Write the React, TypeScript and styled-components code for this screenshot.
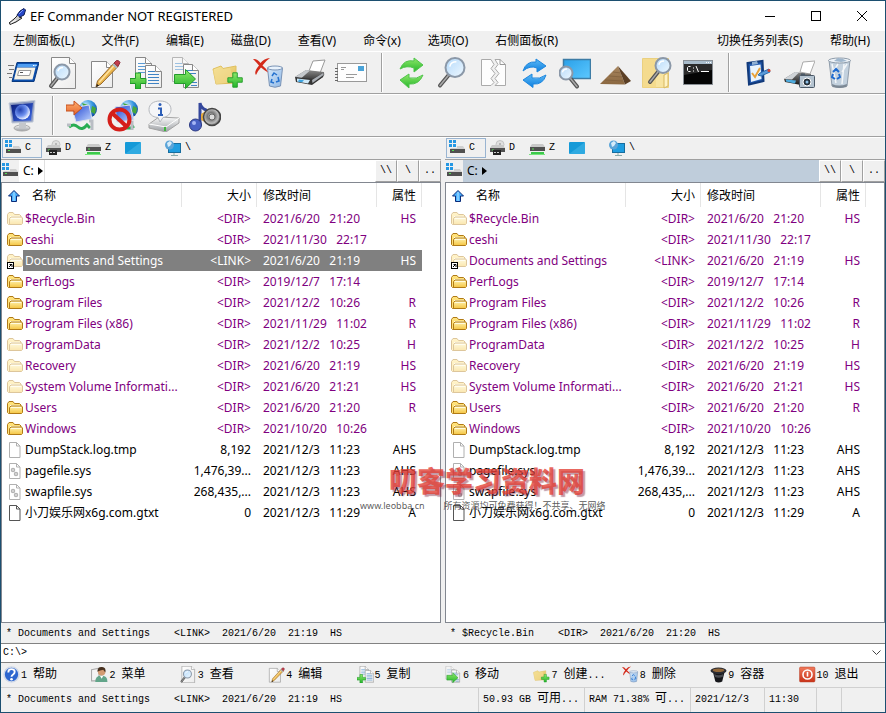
import React from 'react';
import styled, { createGlobalStyle, css } from 'styled-components';

const sans = '"Noto Sans", "Noto Sans CJK SC", sans-serif';
const mono = '"Liberation Mono", "Noto Sans CJK SC", monospace';

const GlobalStyle = createGlobalStyle`
  *, *::before, *::after { box-sizing: border-box; }
  html, body { margin: 0; padding: 0; }
  body { background: #f0f0f0; color: #000; font: 12px/16px ${sans}; overflow: hidden; }
  button, input { font: inherit; color: inherit; }
  button { margin: 0; padding: 0; border: 0; background: transparent; }
`;

/* ---------- layout ---------- */

const Window = styled.div`
  display: flex;
  flex-direction: column;
  min-height: 100vh;
  border: 1px solid #1c4f70;
  background: #f0f0f0;
`;

const TitleBar = styled.header`
  display: flex;
  align-items: center;
  height: 30px;
  padding-left: 8px;
  background: #fff;
`;

const Title = styled.h1`
  flex: 1;
  margin: 0 0 0 4px;
  font-size: 13px;
  font-weight: 400;
`;

const CaptionButton = styled.button`
  width: 46px;
  height: 30px;
  display: grid;
  place-items: center;
`;

const MenuBar = styled.nav`
  display: flex;
  height: 21px;
  border-bottom: 1px solid #fff;
`;

const MenuItem = styled.button<{ $push?: boolean }>`
  padding: 0 15px 0 12px;
  white-space: nowrap;
  margin-left: ${(p) => (p.$push ? 'auto' : 0)};
`;

const Toolbar = styled.div<{ $inset?: boolean }>`
  display: flex;
  height: 43px;
  padding-left: ${(p) => (p.$inset ? 1 : 0)}px;
  border-bottom: 1px solid #fff;
  box-shadow: inset 0 -1px #a0a0a0;
`;

const ToolButton = styled.button`
  width: 41px;
  height: 41px;
  display: grid;
  place-items: center;
`;

const Separator = styled.div`
  width: 2px;
  height: 39px;
  margin: 1px 7px 0 10px;
  border-left: 1px solid #a0a0a0;
  border-right: 1px solid #fff;
`;

const Panels = styled.main`
  position: relative;
  flex: 1;
  display: grid;
  grid-template-columns: 1fr 1fr;
  column-gap: 4px;
`;

const Panel = styled.section`
  display: flex;
  flex-direction: column;
  min-width: 0;
`;

const DriveBar = styled.div`
  display: flex;
  height: 22px;
  padding-left: 1px;
  border-bottom: 1px solid #a0a0a0;
`;

const DriveButton = styled.button<{ $active?: boolean }>`
  display: flex;
  align-items: center;
  gap: 4px;
  width: 40px;
  height: 20px;
  padding-left: 2px;
  font: 10px/16px ${mono};
  border: 1px solid ${(p) => (p.$active ? '#99b4d1' : 'transparent')};
`;

const PathBar = styled.div`
  display: flex;
  align-items: stretch;
  height: 22px;
`;

const PathIcon = styled.div`
  width: 18px;
  padding-left: 1px;
  display: flex;
  align-items: center;
`;

const Crumbs = styled.div<{ $focused?: boolean }>`
  flex: 1;
  display: flex;
  align-items: stretch;
  background: ${(p) => (p.$focused ? '#bfcddb' : '#fff')};
`;

const Crumb = styled.button<{ $focused?: boolean }>`
  display: flex;
  align-items: center;
  gap: 4px;
  width: 26px;
  padding-left: 4px;
  border-right: 1px solid ${(p) => (p.$focused ? '#bfcddb' : '#e0e0e0')};
`;

const PathButton = styled.button`
  width: 22px;
  font: 10px/16px ${mono};
  border: 1px solid #a0a0a0;
  border-top: 1px solid #fff;
  border-left: 1px solid #fff;
`;

const ListBox = styled.div`
  flex: 1;
  background: #fff;
  border: 1px solid #828790;
`;

const FileTable = styled.table`
  width: calc(100% - 18px);
  table-layout: fixed;
  border-collapse: collapse;
  white-space: pre;
`;

const Col = styled.col<{ $w?: number }>`
  width: ${(p) => (p.$w ? `${p.$w}px` : 'auto')};
`;

const HeadCell = styled.th<{ $right?: boolean }>`
  height: 25px;
  padding: 0 6px;
  font-weight: 400;
  line-height: 24px;
  text-align: ${(p) => (p.$right ? 'right' : 'left')};
  background: linear-gradient(#e5e5e5, #e5e5e5) right top / 1px 24px no-repeat;
`;

const HeadName = styled.span`
  display: flex;
  align-items: center;
  gap: 12px;
`;

const Cell = styled.td<{ $right?: boolean }>`
  height: 21px;
  padding: 0 6px;
  overflow: hidden;
  line-height: 21px;
  text-align: ${(p) => (p.$right ? 'right' : 'left')};
`;

const IconCell = styled(Cell)`
  padding: 0 0 0 5px;
  && { background: #fff; }
  svg { display: block; }
`;

const NameCell = styled(Cell)`
  padding: 0 0 0 2px;
`;

const Row = styled.tr<{ $dir?: boolean; $selected?: boolean }>`
  color: ${(p) => (p.$dir ? '#800080' : '#000')};
  ${(p) =>
    p.$selected &&
    css`
      color: #fff;
      td { background: #808080; }
    `}
`;

const MonoLine = styled.div`
  height: 20px;
  padding: 1px 0 0 5px;
  font: 10px/19px ${mono};
  white-space: pre;
`;

const CommandBar = styled.div`
  display: flex;
  height: 20px;
  background: #fff;
  border: solid #828282;
  border-width: 1px 0;
`;

const CommandInput = styled.input`
  flex: 1;
  padding: 0 2px 1px;
  border: 0;
  outline: 0;
  background: transparent;
  font: 10px/16px ${mono};
`;

const CommandDrop = styled.button`
  width: 18px;
  display: grid;
  place-items: center;
`;

const FunctionBar = styled.div`
  display: grid;
  grid-template-columns: repeat(10, 1fr);
  height: 25px;
  border-bottom: 1px solid #d0d0d0;
`;

const FunctionButton = styled.button`
  display: flex;
  align-items: center;
  gap: 1px;
  padding-left: 2px;
  padding-bottom: 1px;
  font: 10px/16px ${mono};
  white-space: pre;
`;

const Han = styled.span`
  font: 12px/16px ${sans};
`;

const StatusBar = styled.footer`
  display: flex;
  height: 24px;
  font: 10px/24px ${mono};
  white-space: pre;
`;

const StatusCell = styled.div<{ $w?: number }>`
  ${(p) => (p.$w ? `width: ${p.$w}px;` : 'flex: 1;')}
  padding-left: ${(p) => (p.$w ? 4 : 5)}px;
  overflow: hidden;
  & + & { border-left: 1px solid #d0d0d0; }
`;

const Watermark = styled.div`
  position: absolute;
  left: 359px;
  top: 323px;
  width: 260px;
  pointer-events: none;
  white-space: nowrap;
`;

const WatermarkTitle = styled.div`
  padding-left: 29px;
  font: 900 28px/38px "Noto Sans CJK SC", sans-serif;
  color: rgba(226, 62, 52, 0.78);
  text-shadow: 2px 2px 1px rgba(120, 30, 60, 0.45);
`;

const WatermarkNote = styled.div`
  display: flex;
  gap: 19px;
  padding-top: 1px;
  font: 9px/12px ${sans};
  color: rgba(60, 60, 60, 0.85);
`;

/* ---------- icons ---------- */

const Svg = ({ s = 32, children }: { s?: number; children: React.ReactNode }) => (
  <svg width={s} height={s} viewBox="0 0 32 32" fill="none" aria-hidden="true">
    {children}
  </svg>
);

const HiddenSvg = styled.svg`
  position: absolute;
  width: 0;
  height: 0;
`;

const Grad = ({ id, a, b, d }: { id: string; a: string; b: string; d?: boolean }) => (
  <linearGradient id={id} x1="0" y1="0" x2={d ? 1 : 0} y2="1">
    <stop stopColor={a} />
    <stop offset="1" stopColor={b} />
  </linearGradient>
);

const Defs = () => (
  <HiddenSvg aria-hidden="true">
    <defs>
      <Grad id="paper" a="#fff" b="#ececec" d />
      <Grad id="green" a="#8fe86a" b="#23b52b" />
      <Grad id="blue" a="#5cb9f5" b="#0d7fe0" />
      <Grad id="sky" a="#2aa0e8" b="#5cc8ff" d />
      <Grad id="lens" a="#b4d9fa" b="#eef8ff" d />
      <Grad id="folder" a="#f8e8a0" b="#dfb84e" d />
      <Grad id="bin" a="#d5e8fa" b="#8db7e6" d />
      <Grad id="dark" a="#8a8a8a" b="#161616" />
      <Grad id="metal" a="#fafafa" b="#9a9ea3" />
      <Grad id="night" a="#0a1b78" b="#3d6be8" d />
      <Grad id="screen" a="#1a3fd0" b="#c3d8ff" d />
      <Grad id="orange" a="#ffb070" b="#e5642c" />
      <Grad id="red" a="#f07a5c" b="#c93218" />
      <Grad id="sand" a="#a98760" b="#8a6740" />
      <Grad id="fold16" a="#fff3b0" b="#f5c542" />
      <radialGradient id="globe" cx=".35" cy=".3" r=".8">
        <stop stopColor="#cdeeff" />
        <stop offset=".5" stopColor="#3796e0" />
        <stop offset="1" stopColor="#0b3f94" />
      </radialGradient>
      <radialGradient id="moon" cx=".35" cy=".35" r=".7">
        <stop stopColor="#2040b0" />
        <stop offset=".6" stopColor="#6f92f0" />
        <stop offset="1" stopColor="#fff" />
      </radialGradient>
      <radialGradient id="cone" cx=".45" cy=".45" r=".6">
        <stop stopColor="#f4f4f4" />
        <stop offset=".35" stopColor="#777" />
        <stop offset=".7" stopColor="#bbb" />
        <stop offset="1" stopColor="#444" />
      </radialGradient>
    </defs>
  </HiddenSvg>
);

const Plus = ({ x, y, k = 1 }: { x: number; y: number; k?: number }) => (
  <path
    transform={`translate(${x} ${y}) scale(${k})`}
    d="M-3-8h5v5.500h5.500v5h-5.500v5.500h-5v-5.500h-5.500v-5h5.500z"
    fill="url(#green)"
    stroke="#1f9a28"
  />
);

const Glass = ({ x, y, r, hx, hy }: { x: number; y: number; r: number; hx: number; hy: number }) => {
  const len = Math.hypot(hx - x, hy - y);
  const sx = x + ((hx - x) * r) / len;
  const sy = y + ((hy - y) * r) / len;
  return (
    <g>
      <path d={`M${sx} ${sy}L${hx} ${hy}`} stroke="#555" strokeWidth="4" strokeLinecap="round" />
      <path d={`M${sx} ${sy}L${hx} ${hy}`} stroke="#aaa" strokeWidth="1.500" strokeLinecap="round" />
      <circle cx={x} cy={y} r={r} fill="url(#lens)" stroke="#8b98a8" strokeWidth="2" />
      <path d={`M${x - r * 0.55} ${y - r * 0.1}q${r * 0.1}-${r * 0.5} ${r * 0.7}-${r * 0.5}`} stroke="#fff" strokeWidth="1.500" />
    </g>
  );
};

const Page = ({ x, y, w, h }: { x: number; y: number; w: number; h: number }) => (
  <g stroke="#888">
    <path d={`M${x} ${y}h${w - 6}l6 6v${h - 6}h${-w}z`} fill="url(#paper)" />
    <path d={`M${x + w - 6} ${y}v6h6`} fill="#fff" />
  </g>
);

const icons = {
  speed: (s?: number) => (
    <Svg s={s}>
      <path d="M1 8.500h6M2 12.500h5M0 16.500h5M2 20.500h3" stroke="#777" />
      <path d="M10 5.500h22l-5 19H5z" fill="#0b4fae" stroke="#0a3a80" />
      <path d="M11 7h19l-1 3H10z" fill="#4f9df0" />
      <path d="M10 10.500h18.500l-3 12H7z" fill="#f6f2e6" />
      <path d="M12 13.500h12l-1.500 5h-12z" fill="#fff" stroke="#999" />
      <path d="M13 15.500h3" stroke="#555" />
      <path d="M26 8.500h1.500M28.500 8.500h1" stroke="#fff" />
    </Svg>
  ),
  view: (s?: number) => (
    <Svg s={s}>
      <Page x={3.5} y={0.5} w={24} h={31} />
      <Glass x={14} y={15} r={7.5} hx={3} hy={29} />
    </Svg>
  ),
  edit: (s?: number) => (
    <Svg s={s}>
      <Page x={2.5} y={4.5} w={21} h={26} />
      <path d="M25 6l4 3.500L12 27l-5 3 1.500-6z" fill="#e9b54c" stroke="#96662a" />
      <path d="M26 7.500L10 25.500" stroke="#ffe2a0" strokeWidth="1.500" />
      <path d="M25 6l2.500-2.500q2.500-.5 3.500 2L29 9.500z" fill="#c33d4c" stroke="#8c2f3c" />
      <path d="M24 7l4 4" stroke="#a7b6c2" strokeWidth="2" />
      <path d="M7 30l1-3 2 1.500z" fill="#222" />
    </Svg>
  ),
  copy: (s?: number) => (
    <Svg s={s}>
      <Page x={5.5} y={0.5} w={16} h={24} />
      <path d="M8 6.500h7M8 9.500h9M8 12.500h9M8 15.500h9" stroke="#5b9bd5" />
      <Page x={15.500} y={8.500} w={16} h={22} />
      <path d="M18 14.500h7M18 17.500h11M18 20.500h11M18 23.500h11M18 26.500h11" stroke="#3f83c4" />
      <Plus x={8.500} y={24} />
    </Svg>
  ),
  move: (s?: number) => (
    <Svg s={s}>
      <g opacity=".55">
        <Page x={1.5} y={0.5} w={16} h={24} />
        <path d="M4 6.500h7M4 9.500h9M4 12.500h9" stroke="#5b9bd5" />
      </g>
      <Page x={12.5} y={7.500} w={15} h={23} />
      <path d="M15 13.500h7M15 16.500h10M20 25.500h6M20 28.500h6" stroke="#3f83c4" />
      <path d="M3.500 17.500h11v-5l10 9.500-10 9.500v-5h-11z" fill="url(#green)" stroke="#239b2b" />
    </Svg>
  ),
  newFolder: (s?: number) => (
    <Svg s={s}>
      <path d="M1 12l8-3 2 2.500 13-2.500v17L4 27z" fill="url(#folder)" stroke="#e0c060" />
      <path d="M1 13.500L18 11l4 14-18 2z" fill="#f2dc92" opacity=".7" />
      <Plus x={23.500} y={23} k={0.9} />
    </Svg>
  ),
  remove: (s?: number) => (
    <Svg s={s}>
      <path d="M14.500 11h15l-2 18q-5.500 2.500-11 0z" fill="url(#bin)" stroke="#7a93b5" />
      <ellipse cx="22" cy="11" rx="7.500" ry="2" fill="#e8f2fc" stroke="#7a93b5" />
      <path d="M19 19l2-3 3 2M25 20l1 4-3 1M21 26l-3-1 1-3" stroke="#2472cf" strokeWidth="1.500" />
      <path d="M0 2Q4 1.500 7.500 6 11 1.500 17 1q-4.500 3-7.500 7.500Q14 12 15 15.500q-3.500-2-7-5Q4.500 14 3 18q-2.500-3 3-9.500Q3 5 0 2z" fill="#d42a1a" />
    </Svg>
  ),
  print: (s?: number) => (
    <Svg s={s}>
      <path d="M15 14l4-10 12-1-5 13z" fill="#fff" stroke="#999" />
      <path d="M1 20l11-7 18 2q1 3-1 5L18 27z" fill="url(#dark)" />
      <path d="M1 20l11-7 4 .5-9 8z" fill="#c4c8cc" />
      <path d="M1 20l18 2 10-6v4l-11 8-16-3z" fill="#353535" />
      <path d="M3 21.500l13 1.500-2 3.500-11-2z" fill="#cfe9f8" />
      <path d="M5 22.500l5 .8-2 2-4-.6z" fill="#3aa2df" />
      <path d="M18 23l11-7 .5 2-11 8z" fill="#a8adb3" />
    </Svg>
  ),
  mail: (s?: number) => (
    <Svg s={s}>
      <rect x="2.500" y="6.500" width="29" height="18" fill="#fdfdfd" stroke="#999" />
      <rect x="23" y="9" width="6" height="5" fill="#4aa3d8" />
      <path d="M6 10.500h5M6 12.500h3M11 17.500h11M11 20.500h8" stroke="#999" />
      <path d="M0 11.500h3M0 14.500h3M0 17.500h3M0 20.500h3M0 23.500h3" stroke="#666" />
    </Svg>
  ),
  refresh: (s?: number) => (
    <Svg s={s}>
      <path d="M5 12Q9 2 19 4V1l9 7-9 7v-4Q12 8 5 12z" fill="url(#green)" stroke="#4fc44a" />
      <path d="M28 18Q24 28 14 27v4l-9-8 9-6v4q8 1.500 14-3z" fill="url(#green)" stroke="#4fc44a" />
    </Svg>
  ),
  search: (s?: number) => (
    <Svg s={s}>
      <Glass x={19} y={10.5} r={9.5} hx={4} hy={28.500} />
    </Svg>
  ),
  split: (s?: number) => (
    <Svg s={s}>
      <path d="M4.500 2.500H14l3 5-3 4 4 5-4 5 3 4-3 3H4.500z" fill="#fdfdfd" stroke="#aaa" />
      <path d="M18 2.500h5l5.500 5v21H18l3-3-3-4 4-5-4-5 3-4z" fill="#fdfdfd" stroke="#aaa" />
      <path d="M23 2.500v5h5.500" stroke="#999" />
    </Svg>
  ),
  sync: (s?: number) => (
    <Svg s={s}>
      <path d="M5 14Q8 4 18 5V2l10 7-9 6v-4Q12 8 5 14z" fill="url(#blue)" stroke="#1d86de" />
      <path d="M28 18Q25 28 15 27v3.500L5 23l9-6v4q8 1.500 14-3z" fill="url(#blue)" stroke="#1d86de" />
    </Svg>
  ),
  screenSearch: (s?: number) => (
    <Svg s={s}>
      <rect x="4.500" y="2.500" width="27" height="19" fill="url(#sky)" stroke="#3d7ca5" strokeWidth="1.500" />
      <Glass x={7} y={16} r={6.500} hx={18} hy={29.500} />
    </Svg>
  ),
  pyramid: (s?: number) => (
    <Svg s={s}>
      <path d="M18 9L0 27l25 .5z" fill="url(#sand)" />
      <path d="M18 9l13 15-6 3.500z" fill="#5b3f25" />
      <path d="M13 15l8 1M9 19l13 1M5 23l18 1" stroke="#7a5a38" opacity=".6" />
    </Svg>
  ),
  folderSearch: (s?: number) => (
    <Svg s={s}>
      <path d="M1.500 1.500h26v29h-26z" fill="#f8e4a0" stroke="#ead080" />
      <path d="M2 2h13v29H2z" fill="#f1d582" opacity=".6" />
      <path d="M23 18l4-2v13l-4 2z" fill="#fff3c4" stroke="#d8b860" />
      <Glass x={22} y={8.500} r={7.500} hx={9} hy={25} />
    </Svg>
  ),
  console: (s?: number) => (
    <Svg s={s}>
      <rect x="1.500" y="3.500" width="29" height="24" fill="#050505" stroke="#8a9096" />
      <path d="M2 4h28v3H2z" fill="#a9bccb" />
      <path d="M2 7h28v6L2 18z" fill="#2b2b2b" />
      <path d="M24 5.500h1M26 5.500h1M28 5.500h1" stroke="#fff" />
      <path d="M8.500 9.500h-2l-1 1v3l1 1h2M11.500 10.500v1M11.500 13.500v1M14 9l2.500 6M19 14.500h8" stroke="#fff" />
    </Svg>
  ),
  checklist: (s?: number) => (
    <Svg s={s}>
      <path d="M5.500 6l15-2 1 20L7 27.500z" fill="#2058ad" stroke="#123a7a" strokeWidth="2" />
      <path d="M8 9l10.500-1.500 1 14.500L9 25z" fill="#e9f3fd" />
      <path d="M10 5l5-1 1 3-6 1z" fill="#8fb0d4" />
      <path d="M10 16l3 4 5-9" stroke="#e9a23a" strokeWidth="2" />
      <path d="M16 18l2-2 9-4 1 3-9 4z" fill="#5b9ad8" stroke="#2b6cb0" />
      <circle cx="27" cy="13.500" r="1.500" fill="#d8442c" />
    </Svg>
  ),
  printCamera: (s?: number) => (
    <Svg s={s}>
      <path d="M17 15l3-10 12-1-5 13z" fill="#fff" stroke="#aaa" />
      <path d="M1 22l11-7 16 2v8l-10 3-16-3z" fill="url(#dark)" />
      <path d="M1 22l11-7 4 .5-7 7z" fill="#cfd3d7" />
      <path d="M3 22.500l10 1-1 3-9-2z" fill="#4eacdf" />
      <rect x="16.500" y="18.500" width="15" height="12" rx="1" fill="#b4c3d0" stroke="#4a5866" />
      <circle cx="24" cy="25" r="4" fill="#26323c" stroke="#fff" />
      <circle cx="24" cy="25" r="1.500" fill="#8ec0e8" />
      <path d="M18 17.500h4" stroke="#4a5866" strokeWidth="2" />
    </Svg>
  ),
  recycle: (s?: number) => (
    <Svg s={s}>
      <path d="M5 3h21l-3 26q-7 3-15 0z" fill="#c3d1de" stroke="#8f9caa" />
      <path d="M8 27q7 3 15 0l-.5 3q-7 2-14 0z" fill="#7c8894" />
      <ellipse cx="15.500" cy="3.500" rx="11" ry="2.500" fill="#eef3f8" stroke="#8f9caa" />
      <path d="M8 7l4 19M14 7l-5 8M20 7l-2 20M23 7l-5 8" stroke="#fff" strokeWidth="1.500" opacity=".8" />
      <path d="M10 4l4-3 5 1 4 2-6 1z" fill="#9fb6cc" />
      <path d="M9 15l3-3 3 3M15 17l1 3-3 2M11 22l-3-2 1-3" stroke="#1e6bd0" strokeWidth="2" />
    </Svg>
  ),
  nightScreen: (s?: number) => (
    <Svg s={s}>
      <ellipse cx="16" cy="28" rx="8" ry="3" fill="url(#metal)" stroke="#aaa" />
      <path d="M13 22h7v6h-7z" fill="#c4c7cb" />
      <path d="M3 3l26-2.500-2 21.500L6 23z" fill="#8c9ac0" stroke="#c4ccd8" />
      <path d="M5 5l22-2-2 17.500L7.500 21z" fill="url(#night)" />
      <circle cx="16.500" cy="12" r="7.500" fill="url(#moon)" />
    </Svg>
  ),
  netConnect: (s?: number) => (
    <Svg s={s}>
      <circle cx="22" cy="9" r="9" fill="url(#globe)" />
      <path d="M16 3l6 2-3 5zM26 6l4 2-1 6-4-2z" fill="#47a83a" />
      <path d="M6 8l17-3 3 14-16 3z" fill="url(#screen)" stroke="#dbe0ea" />
      <path d="M0 5h8V1l8 7-8 7v-4H0z" fill="url(#orange)" stroke="#c5501e" />
      <path d="M3 27q5-4 9 0t9-2l3 3" stroke="#28ad52" strokeWidth="3" />
      <path d="M23 21h3v9M1 25h4" stroke="#b9bdc4" strokeWidth="3" />
    </Svg>
  ),
  netDisconnect: (s?: number) => (
    <Svg s={s}>
      <circle cx="22" cy="9" r="9" fill="url(#globe)" />
      <path d="M16 3l6 2-3 5zM26 6l4 2-1 6-4-2z" fill="#47a83a" />
      <path d="M8 7l15-2 4 15-17 2z" fill="url(#screen)" stroke="#dbe0ea" />
      <path d="M16 28h8l3-2" stroke="#28ad52" strokeWidth="3" />
      <path d="M25 21v9" stroke="#b9bdc4" strokeWidth="3" />
      <circle cx="12.500" cy="19.500" r="10" stroke="#d51f1a" strokeWidth="4" />
      <path d="M5 13l14 13" stroke="#d51f1a" strokeWidth="4" />
    </Svg>
  ),
  driveInfo: (s?: number) => (
    <Svg s={s}>
      <path d="M1 24l10-7 20 1v5l-13 9-17-4z" fill="url(#metal)" stroke="#a2a2a2" />
      <path d="M1 24l17 3 13-9" stroke="#fff" />
      <path d="M17 27v4" stroke="#3db83d" strokeWidth="2" />
      <path d="M12 1c7 0 11 3.500 11 8.500 0 4.500-4 7.500-8 8l-3 4.500-2-4.500C4 17 1 14 1 9.500 1 4.500 5 1 12 1z" fill="#f5f6f8" stroke="#b5b8bd" />
      <circle cx="12" cy="4.500" r="1.500" fill="#2e5fb8" />
      <path d="M10 8.500h3v6.500M10 15h5" stroke="#2e5fb8" strokeWidth="2" />
    </Svg>
  ),
  audio: (s?: number) => (
    <Svg s={s}>
      <path d="M11 26V3q1 5 6 7 3 3 0 7" stroke="#34479c" strokeWidth="3" />
      <circle cx="6.500" cy="25" r="6" fill="#4961c4" stroke="#2a3880" />
      <circle cx="5" cy="23" r="2" fill="#a7b6f5" />
      <path d="M12 14l8-5v15l-8-4z" fill="#e4a83e" />
      <circle cx="23" cy="17" r="8.500" fill="url(#cone)" stroke="#444" strokeWidth="1.500" />
      <circle cx="23" cy="17" r="3" fill="#ddd" stroke="#666" />
    </Svg>
  ),
  help: (s?: number) => (
    <Svg s={s}>
      <circle cx="16" cy="16" r="14" fill="#2d66cf" stroke="#cfd8e8" strokeWidth="3" />
      <path d="M10 12q0-6 6-6t6 5q0 3-3 5t-3 4" stroke="#fff" strokeWidth="3.500" />
      <circle cx="16" cy="25" r="2.500" fill="#fff" />
    </Svg>
  ),
  person: (s?: number) => (
    <Svg s={s}>
      <path d="M1 7l14-3v24H1z" fill="#f3f3f3" stroke="#aaa" strokeWidth="2" />
      <path d="M8 30q0-11 11-12 12 0 12 12z" fill="#62a58a" />
      <circle cx="20" cy="11" r="7" fill="#d39b72" />
      <path d="M12 11q0-10 9-9 8 1 6 10l-4-5q-6 1-11 4z" fill="#47311f" />
      <path d="M17 19l3 5 3-5z" fill="#fff" />
    </Svg>
  ),
  hat: (s?: number) => (
    <Svg s={s}>
      <path d="M5 9l5 20q6 4 13 0l5-20z" fill="#15161a" />
      <ellipse cx="16" cy="9" rx="15" ry="6" fill="#2a2c33" />
      <ellipse cx="16" cy="8" rx="11" ry="3.500" fill="#93683a" />
      <path d="M8 15q8 5 17 0l-1 5q-8 4-15 0z" fill="#4a4c52" />
    </Svg>
  ),
  power: (s?: number) => (
    <Svg s={s}>
      <rect x="1" y="2" width="29" height="28" rx="2" fill="url(#red)" stroke="#b9442c" />
      <circle cx="16" cy="16" r="8.500" stroke="#fff" strokeWidth="3" />
      <path d="M16 11v9" stroke="#fff" strokeWidth="3" />
    </Svg>
  ),
};

const WinMark = () => <path d="M0 0h3v3H0zM4 0h3v3H4zM0 4h3v3H0zM4 4h3v3H4z" fill="#2497e3" />;

const Small = ({ children }: { children: React.ReactNode }) => (
  <svg width="16" height="16" viewBox="0 0 16 16" fill="none" aria-hidden="true">
    {children}
  </svg>
);

const DriveShape = ({ y }: { y: number }) => (
  <g>
    <path d={`M3 ${y}h11l2 3H1z`} fill="#c9c9c9" />
    <path d={`M1 ${y + 3}h15v4H1z`} fill="#505050" />
    <path d={`M3 ${y + 5}h2`} stroke="#54dd54" />
  </g>
);

const SystemDrive = () => (
  <Small>
    <path d="M8 6h6l2 3H1l1-1h6z" fill="#d0d0d0" />
    <path d="M1 9h15v4H1z" fill="#505050" />
    <path d="M3 10.500h2" stroke="#54dd54" />
    <WinMark />
  </Small>
);
const OpticalDrive = () => (
  <Small>
    <circle cx="11" cy="4.500" r="4" fill="#e0e0e0" stroke="#c4c4c4" />
    <circle cx="11" cy="4" r="1" fill="#aaa" />
    <DriveShape y={5} />
    <path d="M4 10h8v5H4z" fill="#222" />
    <path d="M5 12.500h6" stroke="#ccc" strokeDasharray="2 1" />
  </Small>
);
const NetDrive = () => (
  <Small>
    <DriveShape y={4} />
    <path d="M2 12h13v2H2z" fill="#3cc94b" />
    <path d="M0 14h16v1H0z" fill="#75e37d" />
  </Small>
);
const Desktop = () => (
  <Small>
    <rect x="0" y="2" width="16" height="12" rx="1" fill="#159ad8" />
    <path d="M0 14L16 2v11l-1 1z" fill="#49b9ea" opacity=".5" />
  </Small>
);
const Network = () => (
  <Small>
    <rect x="3.500" y="3.500" width="12" height="9" fill="#1f9de0" stroke="#176d9e" />
    <path d="M9 13v2M6 15.500h7" stroke="#8aa" />
    <circle cx="4.500" cy="5" r="4.500" fill="#5ba4d8" />
    <path d="M2 3l3-2 2 2-2 3-2 1z" fill="#d6ecfa" />
  </Small>
);

type Kind = 'dir' | 'dim' | 'link' | 'blank' | 'sys' | 'doc';

const FileIcon = ({ kind }: { kind: Kind }) => {
  if (kind === 'dir' || kind === 'dim' || kind === 'link') {
    return (
      <Small>
        <g opacity={kind === 'dir' ? 1 : 0.42}>
          <path d="M.500 12.500v-9l1.500-2h4l1.500 2h5l1.500 1.500v7.500l-1 1H1.500z" fill="#ffe27a" stroke="#b07a16" />
          <path d="M3 5.500h10" stroke="#fffbe0" />
          <path d="M2.500 13.500V7.500L4 6h10.500l1 1v5.500l-1 1z" fill="url(#fold16)" stroke="#b07a16" />
          <path d="M4 7.500h10" stroke="#fffbe0" />
        </g>
        {kind === 'link' && (
          <g>
            <rect x=".500" y="9.500" width="6" height="6" fill="#fff" stroke="#000" />
            <path d="M2 14l3-3M2.500 11.500H5V14" stroke="#000" />
          </g>
        )}
      </Small>
    );
  }
  const line = kind === 'doc' ? '#555' : '#b0b0b0';
  return (
    <Small>
      <path d="M2.500.500h7l3.500 3.500v11.500H2.500z" fill="#fff" stroke={line} />
      <path d="M9.500.500v3.500H13" stroke={line} />
      {kind === 'sys' && (
        <g stroke="#b4b4b4" strokeWidth="1.500">
          <circle cx="6" cy="7" r="1.500" />
          <circle cx="9" cy="11" r="1.500" />
        </g>
      )}
    </Small>
  );
};

const AppIcon = () => (
  <svg width="17" height="17" viewBox="0 0 17 17" fill="none" aria-hidden="true">
    <path d="M8 7l3-4 4-2.500 1.500 1.500-1.500 5-6 3z" fill="#2748c8" stroke="#0b1a50" />
    <path d="M10 6l4-4" stroke="#7d9bff" />
    <path d="M8.500 7.500L5 11l-5 4 1 1.500 6-2.500 6-4-3-1" fill="#ccc" stroke="#222" />
    <path d="M2 15l5-3" stroke="#fff" />
  </svg>
);

const UpArrow = () => (
  <svg width="12" height="12" viewBox="0 0 12 12" fill="none" aria-hidden="true">
    <path d="M6 .500l5.500 5.500h-3v5.500h-5V6h-3z" fill="#4ab2ff" stroke="#0a2a78" />
    <path d="M6 2v9" stroke="#b7e4ff" />
  </svg>
);

/* ---------- data ---------- */

type Entry = [name: string, size: string, date: string, time: string, attr: string, kind: Kind];

const entries: Entry[] = [
  ['$Recycle.Bin', '<DIR>', '2021/6/20', '21:20', 'HS', 'dim'],
  ['ceshi', '<DIR>', '2021/11/30', '22:17', '', 'dir'],
  ['Documents and Settings', '<LINK>', '2021/6/20', '21:19', 'HS', 'link'],
  ['PerfLogs', '<DIR>', '2019/12/7', '17:14', '', 'dir'],
  ['Program Files', '<DIR>', '2021/12/2', '10:26', 'R', 'dir'],
  ['Program Files (x86)', '<DIR>', '2021/11/29', '11:02', 'R', 'dir'],
  ['ProgramData', '<DIR>', '2021/12/2', '10:25', 'H', 'dim'],
  ['Recovery', '<DIR>', '2021/6/20', '21:19', 'HS', 'dim'],
  ['System Volume Informati...', '<DIR>', '2021/6/20', '21:21', 'HS', 'dim'],
  ['Users', '<DIR>', '2021/6/20', '21:20', 'R', 'dir'],
  ['Windows', '<DIR>', '2021/10/20', '10:26', '', 'dir'],
  ['DumpStack.log.tmp', '8,192', '2021/12/3', '11:23', 'AHS', 'blank'],
  ['pagefile.sys', '1,476,39...', '2021/12/3', '11:23', 'AHS', 'sys'],
  ['swapfile.sys', '268,435,...', '2021/12/3', '11:23', 'AHS', 'sys'],
  ['小刀娱乐网x6g.com.gtxt', '0', '2021/12/3', '11:29', 'A', 'doc'],
];

type IconName = keyof typeof icons;

const toolGroups: [IconName, string][][] = [
  [
    ['speed', '快速启动'],
    ['view', '查看'],
    ['edit', '编辑'],
    ['copy', '复制'],
    ['move', '移动'],
    ['newFolder', '创建目录'],
    ['remove', '删除'],
    ['print', '打印'],
    ['mail', '邮件'],
  ],
  [
    ['refresh', '刷新'],
    ['search', '搜索'],
    ['split', '分割'],
    ['sync', '同步'],
    ['screenSearch', '查找窗口'],
    ['pyramid', '打包'],
    ['folderSearch', '查找文件'],
    ['console', '命令提示符'],
  ],
  [
    ['checklist', '选项'],
    ['printCamera', '打印设置'],
    ['recycle', '回收站'],
  ],
];

const netGroups: [IconName, string][][] = [
  [['nightScreen', '屏幕保护']],
  [
    ['netConnect', '连接'],
    ['netDisconnect', '断开'],
    ['driveInfo', '磁盘信息'],
    ['audio', '音频'],
  ],
];

const functionKeys: [IconName, string, string][] = [
  ['help', '帮助', ''],
  ['person', '菜单', ''],
  ['view', '查看', ''],
  ['edit', '编辑', ''],
  ['copy', '复制', ''],
  ['move', '移动', ''],
  ['newFolder', '创建', '...'],
  ['remove', '删除', ''],
  ['hat', '容器', ''],
  ['power', '退出', ''],
];

const menus = ['左侧面板(L)', '文件(F)', '编辑(E)', '磁盘(D)', '查看(V)', '命令(x)', '选项(O)', '右侧面板(R)', '切换任务列表(S)', '帮助(H)'];

/* ---------- composed parts ---------- */

const Tools = ({ groups, inset }: { groups: [IconName, string][][]; inset?: boolean }) => (
  <Toolbar $inset={inset} role="toolbar">
    {groups.map((group, i) => (
      <React.Fragment key={i}>
        {i > 0 && <Separator />}
        {group.map(([icon, label]) => (
          <ToolButton key={icon} aria-label={label}>
            {icons[icon]()}
          </ToolButton>
        ))}
      </React.Fragment>
    ))}
  </Toolbar>
);

const FilePanel = ({ focused, selected, status }: { focused?: boolean; selected?: number; status: string }) => (
  <Panel>
    <DriveBar>
      <DriveButton $active><SystemDrive />C</DriveButton>
      <DriveButton><OpticalDrive />D</DriveButton>
      <DriveButton><NetDrive />Z</DriveButton>
      <DriveButton aria-label="桌面"><Desktop /></DriveButton>
      <DriveButton><Network />\</DriveButton>
    </DriveBar>
    <PathBar>
      <PathIcon><SystemDrive /></PathIcon>
      <Crumbs $focused={focused}>
        <Crumb $focused={focused}>
          C:
          <svg width="5" height="8" viewBox="0 0 5 8" aria-hidden="true"><path d="M0 0l5 4-5 4z" /></svg>
        </Crumb>
      </Crumbs>
      <PathButton>\\</PathButton>
      <PathButton>\</PathButton>
      <PathButton>..</PathButton>
    </PathBar>
    <ListBox>
      <FileTable>
        <colgroup>
          <Col $w={21} />
          <Col />
          <Col $w={75} />
          <Col $w={120} />
          <Col $w={45} />
        </colgroup>
        <thead>
          <tr>
            <HeadCell colSpan={2} scope="col"><HeadName><UpArrow />名称</HeadName></HeadCell>
            <HeadCell $right scope="col">大小</HeadCell>
            <HeadCell scope="col">修改时间</HeadCell>
            <HeadCell $right scope="col">属性</HeadCell>
          </tr>
        </thead>
        <tbody>
          {entries.map(([name, size, date, time, attr, kind], i) => (
            <Row key={name} $dir={size.startsWith('<')} $selected={i === selected}>
              <IconCell><FileIcon kind={kind} /></IconCell>
              <NameCell>{name}</NameCell>
              <Cell $right>{size}</Cell>
              <Cell>{`${date}   ${time}`}</Cell>
              <Cell $right>{attr}</Cell>
            </Row>
          ))}
        </tbody>
      </FileTable>
    </ListBox>
    <MonoLine>{status}</MonoLine>
  </Panel>
);

export default function App() {
  const leftStatus = '* Documents and Settings    <LINK>  2021/6/20  21:19  HS';
  return (
    <>
      <GlobalStyle />
      <Defs />
      <Window>
        <TitleBar>
          <AppIcon />
          <Title>EF Commander NOT REGISTERED</Title>
          <CaptionButton aria-label="最小化">
            <svg width="11" height="11" aria-hidden="true"><path d="M0 5.500h10" stroke="#000" /></svg>
          </CaptionButton>
          <CaptionButton aria-label="最大化">
            <svg width="11" height="11" aria-hidden="true"><rect x=".5" y=".5" width="9" height="9" fill="none" stroke="#000" /></svg>
          </CaptionButton>
          <CaptionButton aria-label="关闭">
            <svg width="11" height="11" aria-hidden="true"><path d="M0 0l10 10M10 0L0 10" stroke="#000" /></svg>
          </CaptionButton>
        </TitleBar>
        <MenuBar>
          {menus.map((m, i) => (
            <MenuItem key={m} $push={i === 8}>{m}</MenuItem>
          ))}
        </MenuBar>
        <Tools groups={toolGroups} inset />
        <Tools groups={netGroups} />
        <Panels>
          <FilePanel selected={2} status={leftStatus} />
          <FilePanel focused status="* $Recycle.Bin    <DIR>  2021/6/20  21:20  HS" />
          <Watermark>
            <WatermarkTitle>叨客学习资料网</WatermarkTitle>
            <WatermarkNote>
              <span>www.leobba.cn</span>
              <span>所有资源均可免费获得！不共享、无网络</span>
            </WatermarkNote>
          </Watermark>
        </Panels>
        <CommandBar>
          <CommandInput aria-label="命令行" defaultValue="C:\>" />
          <CommandDrop aria-label="历史命令">
            <svg width="9" height="6" fill="none" aria-hidden="true"><path d="M.5.500l4 4 4-4" stroke="#444" /></svg>
          </CommandDrop>
        </CommandBar>
        <FunctionBar>
          {functionKeys.map(([icon, label, tail], i) => (
            <FunctionButton key={icon}>
              {icons[icon](17)}
              <span>{`${i + 1} `}<Han>{label}</Han>{tail}</span>
            </FunctionButton>
          ))}
        </FunctionBar>
        <StatusBar>
          <StatusCell>{leftStatus}</StatusCell>
          <StatusCell $w={106}>50.93 GB <Han>可用</Han>...</StatusCell>
          <StatusCell $w={106}>RAM 71.38% <Han>可</Han>...</StatusCell>
          <StatusCell $w={74}>2021/12/3</StatusCell>
          <StatusCell $w={52}>11:30</StatusCell>
          <StatusCell $w={25} />
          <StatusCell $w={44} />
        </StatusBar>
      </Window>
    </>
  );
}
